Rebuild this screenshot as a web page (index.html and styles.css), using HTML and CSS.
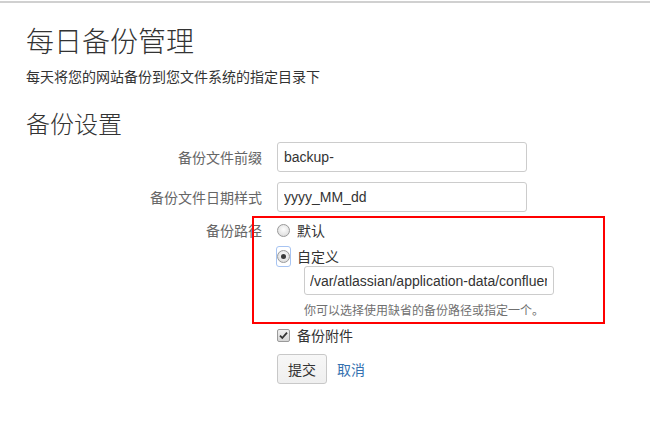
FILE: index.html
```html
<!DOCTYPE html>
<html lang="zh-CN">
<head>
<meta charset="utf-8">
<title>每日备份管理</title>
<link rel="stylesheet" href="styles.css">
</head>
<body>
<div class="topline"></div>
<div class="page">
  <h1 class="title">每日备份管理</h1>
  <p class="desc">每天将您的网站备份到您文件系统的指定目录下</p>
  <h2 class="subtitle">备份设置</h2>
  <form class="form">
    <div class="row">
      <label class="lbl">备份文件前缀</label>
      <div class="field"><input class="text" type="text" value="backup-"></div>
    </div>
    <div class="row">
      <label class="lbl">备份文件日期样式</label>
      <div class="field"><input class="text" type="text" value="yyyy_MM_dd"></div>
    </div>
    <div class="row row-path">
      <label class="lbl lbl-top">备份路径</label>
      <div class="field">
        <div class="opt"><span class="radio-wrap"><span class="radio"></span></span><span class="opt-text">默认</span></div>
        <div class="opt opt-2"><span class="radio-wrap focus"><span class="radio on"></span></span><span class="opt-text">自定义</span></div>
        <div class="sub">
          <input class="text" type="text" value="/var/atlassian/application-data/confluence/backups">
          <div class="help">你可以选择使用缺省的备份路径或指定一个。</div>
        </div>
      </div>
    </div>
    <div class="row row-check">
      <span class="lbl"></span>
      <div class="field">
        <div class="opt"><span class="radio-wrap"><span class="check"><svg width="9" height="9" viewBox="0 0 9 9"><path d="M1 4.6 L3.3 7 L8 1.6" fill="none" stroke="#333" stroke-width="1.8"/></svg></span></span><span class="opt-text">备份附件</span></div>
      </div>
    </div>
    <div class="row row-btn">
      <span class="lbl"></span>
      <div class="field actions">
        <button class="btn" type="button">提交</button>
        <a class="link" href="#">取消</a>
      </div>
    </div>
  </form>
</div>
<div class="annot"></div>
</body>
</html>
```
FILE: styles.css
```css
html, body {
  margin: 0;
  padding: 0;
  background: #fff;
}
body {
  position: relative;
  font-family: "Noto Sans CJK SC", "Liberation Sans", sans-serif;
  color: #333;
  font-size: 14px;
}
.topline {
  margin-top: 1px;
  height: 2px;
  background: #d0d0d0;
  margin-right: 1px;
}
.page {
  padding-top: 1px;
}
.title {
  margin: 19px 0 0 26px;
  font-size: 28px;
  line-height: 34px;
  font-weight: 300;
  color: #333;
}
.desc {
  margin: 9px 0 0 26px;
  font-size: 14px;
  line-height: 20px;
  color: #333;
}
.subtitle {
  margin: 22px 0 0 26px;
  font-size: 24px;
  line-height: 30px;
  font-weight: 300;
  color: #333;
}
.form {
  margin-top: 4px;
  display: flex;
  flex-direction: column;
}
.row {
  display: grid;
  grid-template-columns: 262px 1fr;
  column-gap: 15px;
}
.row + .row {
  margin-top: 10px;
}
.lbl {
  text-align: right;
  color: #666;
  font-size: 14px;
  line-height: 30px;
}
.lbl-top {
  line-height: 20px;
}
.text {
  box-sizing: border-box;
  width: 250px;
  height: 30px;
  border: 1px solid #ccc;
  border-radius: 3px;
  padding: 0 6px;
  font-family: "Liberation Sans", sans-serif;
  font-size: 14px;
  color: #333;
  background: #fff;
  display: block;
  margin: 0;
  outline: none;
}
.row.row-path {
  margin-top: 8px;
}
.opt {
  display: flex;
  align-items: center;
  height: 20px;
  line-height: 20px;
}
.opt-2 {
  margin-top: 6px;
}
.radio-wrap {
  width: 15px;
  height: 21px;
  box-sizing: border-box;
  display: flex;
  align-items: center;
  justify-content: center;
  margin-left: -1px;
  border: 1.5px solid transparent;
  border-radius: 3px;
}
.radio-wrap.focus {
  border-color: #a7c4f2;
}
.radio {
  width: 13px;
  height: 13px;
  box-sizing: border-box;
  border-radius: 50%;
  border: 1px solid #9a9a9a;
  background: radial-gradient(circle at 50% 40%, #fdfdfd 0%, #e6e6e6 60%, #cfcfcf 100%);
  position: relative;
}
.radio.on::after {
  content: "";
  position: absolute;
  left: 3px;
  top: 3px;
  width: 5px;
  height: 5px;
  border-radius: 50%;
  background: #3a3a3a;
}
.opt-text {
  margin-left: 6px;
  color: #333;
  font-size: 14px;
}
.check {
  width: 13px;
  height: 13px;
  box-sizing: border-box;
  border: 1px solid #9a9a9a;
  border-radius: 2px;
  background: linear-gradient(#f0f0f0, #d6d6d6);
  display: flex;
  align-items: center;
  justify-content: center;
}
.sub {
  margin-left: 27px;
}
.sub .text {
  height: 29px;
  padding: 0 6px 0 5px;
}
.help {
  margin-top: 7px;
  font-size: 12px;
  line-height: 16px;
  color: #707070;
}
.row.row-check {
  margin-top: 7px;
}
.row-check .lbl {
  line-height: 20px;
}
.row.row-btn {
  margin-top: 9px;
}
.actions {
  display: flex;
  align-items: center;
  gap: 10px;
}
.btn {
  width: 50px;
  height: 30px;
  box-sizing: border-box;
  border: 1px solid #c8c8c8;
  border-radius: 3px;
  background: linear-gradient(#f7f7f7, #efefef);
  font-family: "Noto Sans CJK SC", sans-serif;
  font-size: 14px;
  color: #333;
  padding: 0;
  margin: 0;
}
.link {
  color: #3572b0;
  text-decoration: none;
  font-size: 14px;
}
.annot {
  position: absolute;
  left: 252px;
  top: 216px;
  width: 353px;
  height: 108px;
  box-sizing: border-box;
  border: 2px solid #ff0000;
}
```
